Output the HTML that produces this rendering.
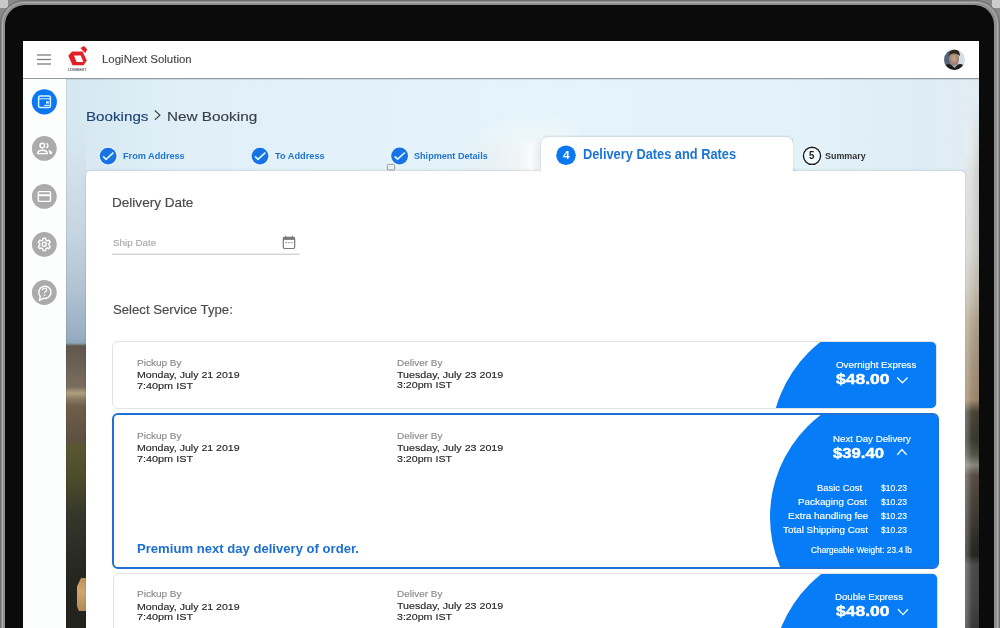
<!DOCTYPE html>
<html><head><meta charset="utf-8">
<style>
*{margin:0;padding:0;box-sizing:border-box}
html,body{width:1000px;height:628px;overflow:hidden;background:#8a8a8a}
body{position:relative;font-family:"Liberation Sans",sans-serif}
.abs{position:absolute}
.t{position:absolute;white-space:nowrap;transform-origin:0 0;font-family:"Liberation Sans",sans-serif}
#rim{left:0;top:0;width:1000px;height:700px;border-radius:24px;background:#8f8f8f;border:1px solid #6e6e6e}
#rim2{left:2px;top:2px;width:996px;height:700px;border-radius:22px;border:1px solid #b0b0b0}
#ltq{left:0;top:0;width:8px;height:8px;background:#c9c9c9}
#rtq{left:992px;top:0;width:8px;height:8px;background:#cdcdcd}
#bezel{left:4.5px;top:4.5px;width:989.5px;height:700px;border-radius:20px;background:#0b0b0b}
#screen{left:23px;top:41px;width:956px;height:600px;background:#dfe9f0;overflow:hidden}
#bg{left:43px;top:38px;width:913px;height:560px;
 background:linear-gradient(180deg,rgba(160,180,195,0) 0px,rgba(160,180,195,0) 105px,rgba(160,180,195,.28) 133px),
  linear-gradient(180deg,rgba(255,255,255,0) 0px,rgba(255,255,255,.0) 100%),
  linear-gradient(90deg,rgb(214,231,241) 0px,rgb(225,240,248) 120px,rgb(229,244,251) 450px,rgb(228,243,250) 720px,rgb(222,237,245) 860px,rgb(226,236,242) 913px);}
#bldgw{left:465px;top:94px;width:55px;height:40px;filter:blur(1.2px)}
#bldg{left:0;top:0;width:55px;height:40px;background:linear-gradient(180deg,rgba(226,234,238,.85),rgba(214,224,229,.85));clip-path:polygon(0 100%,0 45%,18% 38%,30% 30%,50% 22%,70% 12%,100% 8%,100% 100%)}
#glow{left:505px;top:98px;width:30px;height:34px;background:radial-gradient(ellipse at 60% 50%,rgba(255,255,255,.9),rgba(255,255,255,0) 70%)}
#cloud{left:440px;top:70px;width:120px;height:70px;border-radius:50%;background:radial-gradient(ellipse at 60% 70%,rgba(250,252,253,.75) 0%,rgba(245,249,251,.4) 45%,rgba(240,246,249,0) 70%)}
#lstrip{left:43px;top:79px;width:20px;height:521px;-webkit-mask-image:linear-gradient(180deg,transparent 0px,#000 45px);mask-image:linear-gradient(180deg,transparent 0px,#000 45px);
 background:linear-gradient(180deg,#d8e6ee 0px,#d2e0ea 51px,#c6d5e1 111px,#b1c3d2 171px,#98aec2 216px,#90a6b8 223px,#62574c 226px,#6e6458 251px,#7a6e60 267px,#b0a080 273px,#8a7a62 279px,#6e5e4a 286px,#5e5040 321px,#5a5832 327px,#4a4a2c 361px,#36362a 396px,#2c2c26 431px,#24241f 471px)}
#ltan{left:54px;top:537px;width:9px;height:33px;background:linear-gradient(180deg,#b89158,#cfa86c 40%,#b08a58);clip-path:polygon(45% 0,100% 0,100% 100%,20% 100%,0 85%,0 25%);filter:blur(.5px)}
#rstrip{left:942px;top:60px;width:14px;height:540px;
 -webkit-mask-image:linear-gradient(180deg,transparent 0px,#000 50px);mask-image:linear-gradient(180deg,transparent 0px,#000 50px);
 background:linear-gradient(90deg,rgba(255,255,255,.3),rgba(255,255,255,0) 50%,rgba(0,0,0,.08)),
 linear-gradient(180deg,#e2e8ea 0px,#e2e8ea 49px,#dcdfde 70px,#d4d4d0 149px,#c8c2b6 189px,#b6aa94 219px,#a89880 259px,#a08a70 299px,#4a4538 311px,#3a3a30 339px,#55554a 354px,#8a8a80 364px,#5a5048 374px,#3e3a34 419px,#262522 454px,#4e4e4c 464px,#474747 499px,#3a3a3a 527px)}
#sideline{left:43px;top:38px;width:1px;height:570px;background:rgba(0,0,0,.08)}
#header{left:0;top:0;width:956px;height:37px;background:#fff;box-shadow:0 1.2px 1.2px rgba(60,70,78,.6)}
#side{left:0;top:38px;width:43px;height:570px;background:#fcfdfd}
#card{left:62.5px;top:130px;width:879.5px;height:520px;background:#fff;border-radius:4px;box-shadow:0 0 1.5px rgba(0,0,0,.22),0 -1px 3px rgba(0,0,0,.06)}
#tab{left:518px;top:96px;width:252px;height:35px;background:#fff;border-radius:7px 7px 0 0;box-shadow:0 -0.5px 2px rgba(0,0,0,.12)}
.svc{position:absolute;background:#fff;overflow:hidden}
.blob{position:absolute;background:#067cf6}
</style></head><body>
<div id="ltq" class="abs"></div>
<div id="rtq" class="abs"></div>
<div id="rim" class="abs"></div>
<div id="rim2" class="abs"></div>
<div id="bezel" class="abs"></div>
<div id="screen" class="abs">
  <div id="bg" class="abs"></div>
  <div id="cloud" class="abs"></div>
  
  <div id="lstrip" class="abs"></div>
  <div id="ltan" class="abs"></div>
  <div id="rstrip" class="abs"></div>
  <div id="header" class="abs"></div>
  <div id="side" class="abs"></div>
  <div id="sideline" class="abs"></div>
  <div class="abs" style="left:63px;top:96px;width:455px;height:34px;border-radius:0 0 6px 0;box-shadow:1px 1px 2px rgba(0,0,0,.13);background:linear-gradient(90deg,rgba(255,255,255,0) 0px,rgba(255,255,255,0) 360px,rgba(232,238,241,.55) 405px,rgba(238,242,244,.85) 430px,rgba(250,251,252,.95) 445px,rgba(226,232,235,.9) 455px);-webkit-mask-image:linear-gradient(180deg,transparent 0px,#000 12px);mask-image:linear-gradient(180deg,transparent 0px,#000 12px)"></div>
  <div class="abs" style="left:770px;top:96px;width:172px;height:34px;border-radius:0 0 0 6px;box-shadow:-1px 1px 2px rgba(0,0,0,.10)"></div>
  <div id="card" class="abs"></div>
  <div id="tab" class="abs"></div>
  <div class="abs" style="left:518px;top:128px;width:252px;height:6px;background:#fff"></div>
</div>
<!-- service cards in page coords -->
<div class="svc" style="left:112px;top:340.5px;width:825px;height:68.5px;border:1px solid #e3e3e3;border-radius:6px">
  <div class="blob" style="left:658px;top:-27px;width:256px;height:256px;border-radius:50%"></div>
  <div class="blob" style="left:786px;top:0;width:40px;height:68px;border-radius:0"></div>
</div>
<div class="svc" style="left:111.5px;top:412.5px;width:827.5px;height:156.5px;border:2px solid #1f71d6;border-radius:6px">
  <div class="blob" style="left:656.5px;top:-26px;width:256px;height:256px;border-radius:50%"></div>
  <div class="blob" style="left:786px;top:-2px;width:45px;height:160px;border-radius:0"></div>
</div>
<div class="svc" style="left:112.5px;top:573px;width:825px;height:80px;border:1px solid #e3e3e3;border-radius:6px">
  <div class="blob" style="left:658px;top:-27px;width:256px;height:256px;border-radius:50%"></div>
  <div class="blob" style="left:786px;top:0;width:40px;height:80px"></div>
</div>
<svg class="abs" style="left:0;top:0" width="1000" height="628" viewBox="0 0 1000 628">
 <!-- hamburger -->
 <g stroke="#787878" stroke-width="1.25">
  <line x1="37" y1="55" x2="51" y2="55"/><line x1="37" y1="59.5" x2="51" y2="59.5"/><line x1="37" y1="64" x2="51" y2="64"/>
 </g>
 <!-- logo -->
 <path d="M72 51.5 L82.5 51.5 L86.8 60.5 L83.5 65.2 L72.5 65.2 L68.3 55.8 Z M74 55.6 L80.8 55.6 L83.3 62 L76.5 62 Z" fill="#e32024" fill-rule="evenodd"/>
 <path d="M80.5 48 L84 46 L87.2 49.2 L85.5 53 L83.3 51.2 Z" fill="#e32024"/>
 
 <!-- avatar -->
 <defs>
  <clipPath id="av"><circle cx="954.3" cy="59.8" r="10.2"/></clipPath>
  <radialGradient id="face" cx="0.5" cy="0.45" r="0.5"><stop offset="0" stop-color="#caa890"/><stop offset="1" stop-color="#9a7c68"/></radialGradient>
 </defs>
 <g clip-path="url(#av)">
  <rect x="944" y="49" width="21" height="22" fill="#9aa8b8"/>
  <rect x="944" y="49" width="6" height="16" fill="#56647a"/>
  <rect x="958.5" y="50" width="7" height="15" fill="#d4dee8"/>
  <ellipse cx="954" cy="59" rx="5" ry="6.5" fill="url(#face)"/>
  <path d="M948.5 56 Q949 49.5 954.5 49.5 Q960 49.5 960 56 Q957 53 954 53.5 Q951 53 948.5 56Z" fill="#2e2620"/>
  <path d="M944 71 L944 66 Q948 63 951 64.5 L954.5 68 L958 64.5 Q961 63 965 66 L965 71Z" fill="#1c1c1c"/>
 </g>
 <!-- sidebar icons -->
 <circle cx="44.35" cy="101.8" r="12.6" fill="#0b78f2"/>
 <g fill="none" stroke="#d8f6ff" stroke-width="1.5">
  <rect x="38.6" y="96" width="11.8" height="11.6" rx="1.6"/>
  <line x1="39" y1="98.8" x2="50" y2="98.8" stroke-width="1"/>
 </g>
 <rect x="46" y="101.3" width="2.8" height="2.2" fill="#d8f6ff"/>
 <rect x="44.2" y="104.8" width="5" height="1.1" fill="#d8f6ff"/>
 <circle cx="44.3" cy="148.4" r="12.4" fill="#ababab"/>
 <g fill="none" stroke="#fff" stroke-width="1.4">
  <circle cx="42.3" cy="145.6" r="2.3"/>
  <path d="M37.6 153.6 Q37.6 150.3 42.4 150.3 Q47.2 150.3 47.2 153.6 Z"/>
  <path d="M46.3 143.3 A2.4 2.4 0 0 1 46.3 147.9"/>
  
 </g>
 <path d="M48.3 150.1 Q52.3 150.6 52.3 154.1 L49.6 154.1 Q49.6 151.9 48.3 150.1 Z" fill="#fff"/>
 <circle cx="44.3" cy="196.4" r="12.4" fill="#ababab"/>
 <g fill="none" stroke="#fff" stroke-width="1.4">
  <rect x="38.3" y="191.6" width="12.2" height="9.8" rx="1.2"/>
  <line x1="38.5" y1="195.2" x2="50.3" y2="195.2" stroke-width="2"/>
 </g>
 <circle cx="44.3" cy="244.5" r="12.4" fill="#ababab"/>
 <g fill="none" stroke="#fff" stroke-width="1.4" stroke-linejoin="round">
  <path d="M42.58 240.13 L43.10 238.22 L45.50 238.22 L46.02 240.13 L47.13 240.78 L49.05 240.27 L50.26 242.35 L48.86 243.76 L48.86 245.04 L50.26 246.45 L49.05 248.53 L47.13 248.02 L46.02 248.67 L45.50 250.58 L43.10 250.58 L42.58 248.67 L41.47 248.02 L39.55 248.53 L38.34 246.45 L39.74 245.04 L39.74 243.76 L38.34 242.35 L39.55 240.27 L41.47 240.78 Z"/>
  <circle cx="44.3" cy="244.2" r="2"/>
 </g>
 <circle cx="44.3" cy="292.5" r="12.4" fill="#ababab"/>
 <g fill="none" stroke="#fff" stroke-width="1.4" stroke-linejoin="round">
  <path d="M40.2 296.2 A6.1 6.1 0 1 1 43.3 298.2 L39.5 300.3 Z"/>
  <path d="M42.6 290.2 Q42.6 288.1 44.6 288.1 Q46.6 288.1 46.6 290 Q46.6 291.3 45.2 292 Q44.5 292.4 44.5 293.3" stroke-width="1.2"/>
 </g>
 <circle cx="44.5" cy="295.2" r="0.8" fill="#fff"/>
 <!-- breadcrumb chevron -->
 <path d="M154.8 110.5 L159.9 115.2 L154.8 119.9" fill="none" stroke="#3a3f45" stroke-width="1.15"/>
 <!-- tab checks -->
 <g>
  <circle cx="108.1" cy="156.1" r="9.3" fill="#eaf7fc"/>
  <circle cx="108.1" cy="156.1" r="8.4" fill="#1573e6"/>
  <path d="M103.1 156.4 L106.1 159.3 L113.4 152.6" fill="none" stroke="#e0f8ff" stroke-width="1.6"/>
  <circle cx="260" cy="156.1" r="9.3" fill="#eaf7fc"/>
  <circle cx="260" cy="156.1" r="8.4" fill="#1573e6"/>
  <path d="M255 156.4 L258 159.3 L265.3 152.6" fill="none" stroke="#e0f8ff" stroke-width="1.6"/>
  <circle cx="399.6" cy="156" r="9.3" fill="#eaf7fc"/>
  <circle cx="399.6" cy="156" r="8.4" fill="#1573e6"/>
  <path d="M394.6 156.3 L397.6 159.2 L404.9 152.5" fill="none" stroke="#e0f8ff" stroke-width="1.6"/>
 </g>
 <rect x="387.4" y="164.4" width="7.2" height="5.6" rx="1" fill="none" stroke="#9a9a9a" stroke-width="1"/>
 <!-- step 4 / 5 -->
 <circle cx="566" cy="155.3" r="9.8" fill="#0b78f2"/>
 
 <circle cx="812" cy="155.8" r="10.2" fill="#f4fbfe" opacity="0.8"/>
 <circle cx="812" cy="155.8" r="8.6" fill="none" stroke="#1e1e1e" stroke-width="1.4"/>
 
 <!-- calendar -->
 <g fill="none" stroke="#7a7a7a" stroke-width="1.2">
  <rect x="283.3" y="237.3" width="11.4" height="11.2" rx="1.6"/>
 </g>
 <rect x="283.3" y="237.3" width="11.4" height="2.6" fill="#7a7a7a"/>
 <rect x="285" y="235.8" width="1.2" height="2" fill="#7a7a7a"/>
 <rect x="291.8" y="235.8" width="1.2" height="2" fill="#7a7a7a"/>
 <g fill="#7a7a7a"><rect x="285.6" y="242" width="1.3" height="1.2"/><rect x="288.4" y="242" width="1.3" height="1.2"/><rect x="291.2" y="242" width="1.3" height="1.2"/></g>
 <rect x="112" y="253.6" width="187.5" height="1.3" fill="#cfcfcf"/>
 <!-- chevrons -->
 <g fill="none" stroke="#f0fbff" stroke-width="1.35">
  <path d="M897.1 377.6 L902.4 382.7 L907.6 377.6"/>
  <path d="M897.3 454.7 L901.95 449.5 L906.6 454.7"/>
  <path d="M898 609.3 L903 614.6 L907.9 609.3"/>
 </g>
</svg>
<div class="t" style="left:102.3px;top:54.4px;font-size:11.0px;line-height:11.0px;font-weight:400;color:#4a4a4a;transform:scaleX(1.040);-webkit-text-stroke:0.15px currentColor">LogiNext Solution</div>
<div class="t" style="left:85.6px;top:109.7px;font-size:13.3px;line-height:13.3px;font-weight:400;color:#1c4373;transform:scaleX(1.141);-webkit-text-stroke:0.15px currentColor">Bookings</div>
<div class="t" style="left:166.8px;top:109.7px;font-size:13.3px;line-height:13.3px;font-weight:400;color:#384048;transform:scaleX(1.151);-webkit-text-stroke:0.15px currentColor">New Booking</div>
<div class="t" style="left:122.6px;top:151.1px;font-size:9.6px;line-height:9.6px;font-weight:700;color:#2275cf;transform:scaleX(0.954)">From Address</div>
<div class="t" style="left:274.5px;top:151.1px;font-size:9.6px;line-height:9.6px;font-weight:700;color:#2275cf;transform:scaleX(0.961)">To Address</div>
<div class="t" style="left:414.3px;top:151.1px;font-size:9.6px;line-height:9.6px;font-weight:700;color:#2275cf;transform:scaleX(0.947)">Shipment Details</div>
<div class="t" style="left:583.0px;top:147.8px;font-size:13.9px;line-height:13.9px;font-weight:700;color:#1b74d8;transform:scaleX(0.922)">Delivery Dates and Rates</div>
<div class="t" style="left:562.9px;top:150.1px;font-size:11.0px;line-height:11.0px;font-weight:700;color:#ffffff;transform:scaleX(1.078)">4</div>
<div class="t" style="left:809.2px;top:150.9px;font-size:10.0px;line-height:10.0px;font-weight:700;color:#1e1e1e;transform:scaleX(0.971)">5</div>
<div class="t" style="left:68.2px;top:67.9px;font-size:4.3px;line-height:4.3px;font-weight:400;color:#555555;transform:scaleX(0.851);-webkit-text-stroke:0.15px currentColor">LOGINEXT</div>
<div class="t" style="left:825.0px;top:151.3px;font-size:9.4px;line-height:9.4px;font-weight:700;color:#303030;transform:scaleX(0.950)">Summary</div>
<div class="t" style="left:111.8px;top:196.8px;font-size:12.7px;line-height:12.7px;font-weight:400;color:#4a4a4a;transform:scaleX(1.069);-webkit-text-stroke:0.15px currentColor">Delivery Date</div>
<div class="t" style="left:112.5px;top:237.9px;font-size:9.4px;line-height:9.4px;font-weight:400;color:#a9a9a9;transform:scaleX(1.049);-webkit-text-stroke:0.15px currentColor">Ship Date</div>
<div class="t" style="left:112.6px;top:303.3px;font-size:13.0px;line-height:13.0px;font-weight:400;color:#4a4a4a;transform:scaleX(1.013);-webkit-text-stroke:0.15px currentColor">Select Service Type:</div>
<div class="t" style="left:137.0px;top:358.0px;font-size:9.9px;line-height:9.9px;font-weight:400;color:#8a8a8a;transform:scaleX(1.015);-webkit-text-stroke:0.15px currentColor">Pickup By</div>
<div class="t" style="left:137.0px;top:370.1px;font-size:9.9px;line-height:9.9px;font-weight:400;color:#262626;transform:scaleX(1.070);-webkit-text-stroke:0.15px currentColor">Monday, July 21 2019</div>
<div class="t" style="left:137.0px;top:380.6px;font-size:9.9px;line-height:9.9px;font-weight:400;color:#262626;transform:scaleX(1.097);-webkit-text-stroke:0.15px currentColor">7:40pm IST</div>
<div class="t" style="left:397.3px;top:357.8px;font-size:9.9px;line-height:9.9px;font-weight:400;color:#8a8a8a;transform:scaleX(1.009);-webkit-text-stroke:0.15px currentColor">Deliver By</div>
<div class="t" style="left:397.3px;top:369.9px;font-size:9.9px;line-height:9.9px;font-weight:400;color:#262626;transform:scaleX(1.081);-webkit-text-stroke:0.15px currentColor">Tuesday, July 23 2019</div>
<div class="t" style="left:397.3px;top:380.4px;font-size:9.9px;line-height:9.9px;font-weight:400;color:#262626;transform:scaleX(1.077);-webkit-text-stroke:0.15px currentColor">3:20pm IST</div>
<div class="t" style="left:137.0px;top:431.2px;font-size:9.9px;line-height:9.9px;font-weight:400;color:#8a8a8a;transform:scaleX(1.015);-webkit-text-stroke:0.15px currentColor">Pickup By</div>
<div class="t" style="left:137.0px;top:443.3px;font-size:9.9px;line-height:9.9px;font-weight:400;color:#262626;transform:scaleX(1.070);-webkit-text-stroke:0.15px currentColor">Monday, July 21 2019</div>
<div class="t" style="left:137.0px;top:453.8px;font-size:9.9px;line-height:9.9px;font-weight:400;color:#262626;transform:scaleX(1.097);-webkit-text-stroke:0.15px currentColor">7:40pm IST</div>
<div class="t" style="left:397.3px;top:431.0px;font-size:9.9px;line-height:9.9px;font-weight:400;color:#8a8a8a;transform:scaleX(1.009);-webkit-text-stroke:0.15px currentColor">Deliver By</div>
<div class="t" style="left:397.3px;top:443.1px;font-size:9.9px;line-height:9.9px;font-weight:400;color:#262626;transform:scaleX(1.081);-webkit-text-stroke:0.15px currentColor">Tuesday, July 23 2019</div>
<div class="t" style="left:397.3px;top:453.6px;font-size:9.9px;line-height:9.9px;font-weight:400;color:#262626;transform:scaleX(1.077);-webkit-text-stroke:0.15px currentColor">3:20pm IST</div>
<div class="t" style="left:137.0px;top:589.4px;font-size:9.9px;line-height:9.9px;font-weight:400;color:#8a8a8a;transform:scaleX(1.015);-webkit-text-stroke:0.15px currentColor">Pickup By</div>
<div class="t" style="left:137.0px;top:601.5px;font-size:9.9px;line-height:9.9px;font-weight:400;color:#262626;transform:scaleX(1.070);-webkit-text-stroke:0.15px currentColor">Monday, July 21 2019</div>
<div class="t" style="left:137.0px;top:612.0px;font-size:9.9px;line-height:9.9px;font-weight:400;color:#262626;transform:scaleX(1.097);-webkit-text-stroke:0.15px currentColor">7:40pm IST</div>
<div class="t" style="left:397.3px;top:589.2px;font-size:9.9px;line-height:9.9px;font-weight:400;color:#8a8a8a;transform:scaleX(1.009);-webkit-text-stroke:0.15px currentColor">Deliver By</div>
<div class="t" style="left:397.3px;top:601.3px;font-size:9.9px;line-height:9.9px;font-weight:400;color:#262626;transform:scaleX(1.081);-webkit-text-stroke:0.15px currentColor">Tuesday, July 23 2019</div>
<div class="t" style="left:397.3px;top:611.8px;font-size:9.9px;line-height:9.9px;font-weight:400;color:#262626;transform:scaleX(1.077);-webkit-text-stroke:0.15px currentColor">3:20pm IST</div>
<div class="t" style="left:835.6px;top:361.1px;font-size:8.8px;line-height:8.8px;font-weight:400;color:#ffffff;transform:scaleX(1.111);-webkit-text-stroke:0.15px currentColor">Overnight Express</div>
<div class="t" style="left:836.2px;top:371.2px;font-size:15.0px;line-height:15.0px;font-weight:600;color:#ffffff;transform:scaleX(1.164);-webkit-text-stroke:0.45px currentColor">$48.00</div>
<div class="t" style="left:833.0px;top:434.5px;font-size:8.8px;line-height:8.8px;font-weight:400;color:#ffffff;transform:scaleX(1.105);-webkit-text-stroke:0.15px currentColor">Next Day Delivery</div>
<div class="t" style="left:833.3px;top:444.6px;font-size:15.0px;line-height:15.0px;font-weight:600;color:#ffffff;transform:scaleX(1.111);-webkit-text-stroke:0.45px currentColor">$39.40</div>
<div class="t" style="left:137.0px;top:541.8px;font-size:13.2px;line-height:13.2px;font-weight:700;color:#1c6fce;transform:scaleX(0.993)">Premium next day delivery of order.</div>
<div class="t" style="left:816.8px;top:483.6px;font-size:9.0px;line-height:9.0px;font-weight:400;color:#ffffff;transform:scaleX(1.046);-webkit-text-stroke:0.15px currentColor">Basic Cost</div>
<div class="t" style="left:798.0px;top:497.7px;font-size:9.0px;line-height:9.0px;font-weight:400;color:#ffffff;transform:scaleX(1.094);-webkit-text-stroke:0.15px currentColor">Packaging Cost</div>
<div class="t" style="left:787.9px;top:511.6px;font-size:9.0px;line-height:9.0px;font-weight:400;color:#ffffff;transform:scaleX(1.108);-webkit-text-stroke:0.15px currentColor">Extra handling fee</div>
<div class="t" style="left:783.3px;top:525.6px;font-size:9.0px;line-height:9.0px;font-weight:400;color:#ffffff;transform:scaleX(1.096);-webkit-text-stroke:0.15px currentColor">Total Shipping Cost</div>
<div class="t" style="left:881.4px;top:483.6px;font-size:9.0px;line-height:9.0px;font-weight:400;color:#ffffff;transform:scaleX(0.944);-webkit-text-stroke:0.15px currentColor">$10.23</div>
<div class="t" style="left:881.4px;top:497.7px;font-size:9.0px;line-height:9.0px;font-weight:400;color:#ffffff;transform:scaleX(0.944);-webkit-text-stroke:0.15px currentColor">$10.23</div>
<div class="t" style="left:881.4px;top:511.6px;font-size:9.0px;line-height:9.0px;font-weight:400;color:#ffffff;transform:scaleX(0.944);-webkit-text-stroke:0.15px currentColor">$10.23</div>
<div class="t" style="left:881.4px;top:525.6px;font-size:9.0px;line-height:9.0px;font-weight:400;color:#ffffff;transform:scaleX(0.944);-webkit-text-stroke:0.15px currentColor">$10.23</div>
<div class="t" style="left:811.2px;top:546.1px;font-size:8.4px;line-height:8.4px;font-weight:400;color:#ffffff;transform:scaleX(0.995);-webkit-text-stroke:0.15px currentColor">Chargeable Weight: 23.4 lb</div>
<div class="t" style="left:835.0px;top:593.1px;font-size:8.8px;line-height:8.8px;font-weight:400;color:#ffffff;transform:scaleX(1.095);-webkit-text-stroke:0.15px currentColor">Double Express</div>
<div class="t" style="left:836.2px;top:603.0px;font-size:15.0px;line-height:15.0px;font-weight:600;color:#ffffff;transform:scaleX(1.164);-webkit-text-stroke:0.45px currentColor">$48.00</div>
</body></html>
